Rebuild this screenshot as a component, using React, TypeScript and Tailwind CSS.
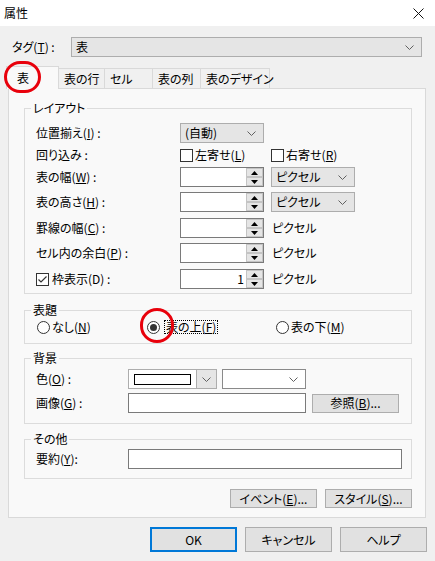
import React from 'react';

const Chevron = ({ color = '#606060' }: { color?: string }) => (
  <svg width="9" height="5" viewBox="0 0 9 5" fill="none">
    <path d="M0.5 0.5 L4.5 4.5 L8.5 0.5" stroke={color} strokeWidth="1" />
  </svg>
);

function Combo({ text, width, gray = true }: { text: string; width: string; gray?: boolean }) {
  return (
    <div
      className={`${width} h-[20px] flex items-center justify-between pl-[4px] pr-[7px] border ${
        gray ? 'bg-[#e5e5e5] border-[#adadad]' : 'bg-white border-[#8a8a8a]'
      }`}
    >
      <span>{text}</span>
      <Chevron />
    </div>
  );
}

function Spin({ value = '' }: { value?: string }) {
  return (
    <div className="w-[84px] h-[20px] border border-[#7a7a7a] bg-white flex">
      <div className="flex-1 text-right pr-[2px] leading-[18px]">{value}</div>
      <div className="w-[17px] flex flex-col">
        <div className="flex-1 bg-[#e5e5e5] border border-[#c4c4c4] flex items-center justify-center">
          <svg width="7" height="4" viewBox="0 0 7 4">
            <path d="M3.5 0 L7 4 H0 Z" fill="#000" />
          </svg>
        </div>
        <div className="flex-1 bg-[#e5e5e5] border border-[#c4c4c4] flex items-center justify-center">
          <svg width="7" height="4" viewBox="0 0 7 4">
            <path d="M0 0 H7 L3.5 4 Z" fill="#000" />
          </svg>
        </div>
      </div>
    </div>
  );
}

function Check({ checked = false }: { checked?: boolean }) {
  return (
    <div className="w-[13px] h-[13px] border border-[#333] bg-white flex items-center justify-center shrink-0">
      {checked && (
        <svg width="9" height="7" viewBox="0 0 9 7" fill="none">
          <path d="M0.5 3.5 L3 6 L8.5 0.5" stroke="#333" strokeWidth="1.2" />
        </svg>
      )}
    </div>
  );
}

function Radio({ checked = false }: { checked?: boolean }) {
  return (
    <div className="w-[13px] h-[13px] rounded-full border border-[#333] bg-white flex items-center justify-center shrink-0">
      {checked && <div className="w-[7px] h-[7px] rounded-full bg-[#333]" />}
    </div>
  );
}

function Group({ title, height, className, children }: { title: string; height: string; className: string; children: React.ReactNode }) {
  return (
    <div className={`relative ml-[15px] w-[388px] ${height} border border-[#dcdcdc] ${className}`}>
      <span className="absolute -top-[9px] left-[6px] px-[2px] leading-[16px] bg-[#f9f9f9]">{title}</span>
      {children}
    </div>
  );
}

function Button({ children, width = 'w-[87px]', height = 'h-[19px]' }: { children: React.ReactNode; width?: string; height?: string }) {
  return (
    <div className={`${width} ${height} bg-[#e1e1e1] border border-[#adadad] flex items-center justify-center`}>
      {children}
    </div>
  );
}

export default function App() {
  const tabs = [
    { label: '表の行', w: 'w-[46px]' },
    { label: 'セル', w: 'w-[48px]' },
    { label: '表の列', w: 'w-[48px]' },
    { label: '表のデザイン', w: 'w-[69px]' },
  ];

  return (
    <div className="relative w-[435px] h-[561px] bg-[#f0f0f0] text-[12px] leading-[16px] text-black font-['Yu_Gothic_UI','Noto_Sans_CJK_JP',sans-serif] [font-feature-settings:'palt'] whitespace-nowrap overflow-hidden">
      {/* title bar */}
      <div className="h-[26px] bg-white flex items-center justify-between pl-[4px] pr-[11px]">
        <span>属性</span>
        <svg width="11" height="11" viewBox="0 0 11 11" fill="none">
          <path d="M0.5 0.5 L10.5 10.5 M10.5 0.5 L0.5 10.5" stroke="#111" strokeWidth="1" />
        </svg>
      </div>

      {/* tag row */}
      <div className="mt-[11px] h-[20px] flex items-center">
        <span className="pl-[12px] w-[71px]">
          タグ(<u>T</u>) :
        </span>
        <Combo text="表" width="w-[351px]" />
      </div>

      {/* tabs */}
      <div className="mt-[9px] h-[23px] -mb-[1px] relative z-10 flex items-start pl-[6px]">
        <div className="w-[53px] h-[23px] bg-[#f9f9f9] border-l border-t border-r border-[#d9d9d9] pl-[10px] flex items-center">
          表
        </div>
        {tabs.map((t) => (
          <div
            key={t.label}
            className={`${t.w} mt-[2px] h-[20px] border-t border-r border-[#d9d9d9] pl-[5px] flex items-center`}
          >
            {t.label}
          </div>
        ))}
      </div>

      {/* panel */}
      <div className="ml-[8px] w-[418px] h-[430px] bg-[#f9f9f9] border border-[#d9d9d9] flex flex-col">
        <Group title="レイアウト" height="h-[186px]" className="mt-[19px] pt-[14px] pl-[11px]">
          <div className="flex items-center h-[20px]">
            <span className="w-[144px]">位置揃え(<u>I</u>) :</span>
            <Combo text="(自動)" width="w-[84px]" />
          </div>
          <div className="mt-[2px] flex items-center h-[20px]">
            <span className="w-[144px]">回り込み :</span>
            <div className="w-[91px] flex items-center gap-[2px]">
              <Check />
              <span>左寄せ(<u>L</u>)</span>
            </div>
            <div className="flex items-center gap-[2px]">
              <Check />
              <span>右寄せ(<u>R</u>)</span>
            </div>
          </div>
          <div className="mt-[2px] flex items-center h-[20px]">
            <span className="w-[144px]">表の幅(<u>W</u>) :</span>
            <Spin />
            <div className="ml-[7px]">
              <Combo text="ピクセル" width="w-[84px]" />
            </div>
          </div>
          <div className="mt-[5px] flex items-center h-[20px]">
            <span className="w-[144px]">表の高さ(<u>H</u>) :</span>
            <Spin />
            <div className="ml-[7px]">
              <Combo text="ピクセル" width="w-[84px]" />
            </div>
          </div>
          <div className="mt-[6px] flex items-center h-[20px]">
            <span className="w-[144px]">罫線の幅(<u>C</u>) :</span>
            <Spin />
            <span className="ml-[8px]">ピクセル</span>
          </div>
          <div className="mt-[5px] flex items-center h-[20px]">
            <span className="w-[144px]">セル内の余白(<u>P</u>) :</span>
            <Spin />
            <span className="ml-[8px]">ピクセル</span>
          </div>
          <div className="mt-[6px] flex items-center h-[20px]">
            <div className="w-[144px] flex items-center gap-[3px]">
              <Check checked />
              <span>枠表示(D) :</span>
            </div>
            <Spin value="1" />
            <span className="ml-[8px]">ピクセル</span>
          </div>
        </Group>

        <Group title="表題" height="h-[34px]" className="mt-[16px] pt-[8px] pl-[12px]">
          <div className="flex items-center h-[16px]">
            <div className="w-[110px] flex items-center gap-[2px]">
              <Radio />
              <span>なし(<u>N</u>)</span>
            </div>
            <div className="w-[129px] flex items-center gap-[4px]">
              <Radio checked />
              <span className="border border-dotted border-black leading-[12px] px-[1px]">
                表の上(<u>F</u>)
              </span>
            </div>
            <div className="flex items-center gap-[2px]">
              <Radio />
              <span>表の下(<u>M</u>)</span>
            </div>
          </div>
        </Group>

        <Group title="背景" height="h-[66px]" className="mt-[14px] pt-[10px] pl-[11px]">
          <div className="flex items-center h-[20px]">
            <span className="w-[92px]">色(<u>O</u>) :</span>
            <div className="w-[89px] h-[20px] border border-[#adadad] bg-white flex items-center">
              <div className="ml-[5px] w-[57px] h-[11px] border border-black bg-white" />
              <div className="ml-auto w-[20px] h-full bg-[#e5e5e5] border-l border-[#adadad] flex items-center justify-center">
                <Chevron />
              </div>
            </div>
            <div className="ml-[5px]">
              <Combo text="" width="w-[84px]" gray={false} />
            </div>
          </div>
          <div className="mt-[4px] flex items-center h-[20px]">
            <span className="w-[92px]">画像(<u>G</u>) :</span>
            <div className="w-[178px] h-[20px] border border-[#7a7a7a] bg-white" />
            <div className="ml-[6px]">
              <Button>参照(<u>B</u>)...</Button>
            </div>
          </div>
        </Group>

        <Group title="その他" height="h-[40px]" className="mt-[15px] pt-[9px] pl-[11px]">
          <div className="flex items-center h-[20px]">
            <span className="w-[92px]">要約(<u>Y</u>):</span>
            <div className="w-[274px] h-[20px] border border-[#7a7a7a] bg-white" />
          </div>
        </Group>

        <div className="mt-[10px] ml-[15px] w-[388px] flex justify-end gap-[8px]">
          <Button>イベント(<u>E</u>)...</Button>
          <Button>スタイル(<u>S</u>)...</Button>
        </div>
      </div>

      {/* dialog buttons */}
      <div className="mt-[9px] pr-[8px] flex justify-end gap-[8px]">
        <div className="w-[87px] h-[25px] bg-[#e1e1e1] border-2 border-[#0078d7] flex items-center justify-center">OK</div>
        <Button height="h-[25px]">キャンセル</Button>
        <Button height="h-[25px]">ヘルプ</Button>
      </div>

      {/* red annotation circles */}
      <div className="absolute z-20 left-[4px] top-[61px] w-[37px] h-[32px] rounded-full border-[3px] border-[#e8000b]" />
      <div className="absolute z-20 left-[140px] top-[308px] w-[34px] h-[35px] rounded-full border-[3px] border-[#e8000b]" />
    </div>
  );
}
